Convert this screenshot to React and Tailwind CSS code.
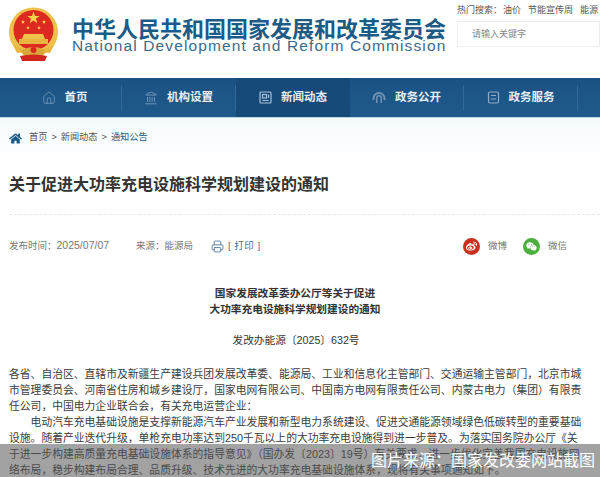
import { Home, Landmark, Printer } from "lucide-react";
import { FaHome, FaWeibo, FaWeixin } from "react-icons/fa";

const font = { fontFamily: '"Liberation Sans", "Noto Sans CJK SC", sans-serif' };

const bodyLines = [
  "各省、自治区、直辖市及新疆生产建设兵团发展改革委、能源局、工业和信息化主管部门、交通运输主管部门，北京市城",
  "市管理委员会、河南省住房和城乡建设厅，国家电网有限公司、中国南方电网有限责任公司、内蒙古电力（集团）有限责",
  "任公司，中国电力企业联合会，有关充电运营企业：",
  "　　电动汽车充电基础设施是支撑新能源汽车产业发展和新型电力系统建设、促进交通能源领域绿色低碳转型的重要基础",
  "设施。随着产业迭代升级，单枪充电功率达到250千瓦以上的大功率充电设施得到进一步普及。为落实国务院办公厅《关",
  "于进一步构建高质量充电基础设施体系的指导意见》（国办发〔2023〕19号）有关要求，进一步优化完善我国充电设施网",
  "络布局，稳步构建布局合理、品质升级、技术先进的大功率充电基础设施体系，现将有关事项通知如下。",
];

const star = (cx, cy, r) => {
  const pts = [];
  for (let i = 0; i < 10; i++) {
    const a = (Math.PI / 5) * i - Math.PI / 2;
    const rad = i % 2 ? r * 0.4 : r;
    pts.push(`${cx + rad * Math.cos(a)},${cy + rad * Math.sin(a)}`);
  }
  return pts.join(" ");
};

function Emblem() {
  return (
    <svg width="50" height="54" viewBox="0 0 50 54" className="shrink-0">
      <circle cx="24.5" cy="25" r="24.5" fill="#efc04a" />
      <circle cx="24.5" cy="23" r="20" fill="#dc2a20" />
      <polygon points={star(24.5, 11, 6.5)} fill="#f8d24a" />
      <polygon points={star(14, 15, 2.2)} fill="#f8d24a" />
      <polygon points={star(35, 15, 2.2)} fill="#f8d24a" />
      <polygon points={star(19, 21, 2)} fill="#f8d24a" />
      <polygon points={star(30, 21, 2)} fill="#f8d24a" />
      <path d="M15 27h19l2 5h-23z" fill="#f0c24c" />
      <rect x="10" y="32" width="29" height="5" fill="#e8b53f" />
      <path d="M4 38 Q24.5 48 45 38 L41 46 Q24.5 43 8 46 Z" fill="#e8b53f" />
      <path d="M13 43 Q24.5 37 36 43 L34 50 Q24.5 47 15 50 Z" fill="#d9a83a" />
      <circle cx="24.5" cy="43" r="3" fill="#dc2a20" />
      <path d="M11 49 Q24.5 46 38 49 L36 54 H13 Z" fill="#cf261d" />
    </svg>
  );
}

function NewsIcon() {
  return (
    <svg width="13" height="13" viewBox="0 0 13 13" fill="none" stroke="#a9c0d6" strokeWidth="1.2">
      <rect x="1" y="1" width="11" height="11" rx="1" />
      <rect x="3.5" y="3.5" width="4" height="3.5" />
      <path d="M9.5 3.5v3.5M3.5 9.5h6" />
    </svg>
  );
}

function OpenIcon() {
  return (
    <svg width="14" height="13" viewBox="0 0 14 13" fill="#6f93b4">
      <path d="M7 1a6.5 6.5 0 0 0-6.5 6.5V9h2V7.5a4.5 4.5 0 0 1 9 0V9h2V7.5A6.5 6.5 0 0 0 7 1Z" />
      <path d="M7 4a3 3 0 0 0-3 3v5h1.5V7a1.5 1.5 0 0 1 3 0v5H10V7a3 3 0 0 0-3-3Z" />
    </svg>
  );
}

function ServiceIcon() {
  return (
    <svg width="13" height="13" viewBox="0 0 13 13" fill="none" stroke="#8fabc6" strokeWidth="1.2">
      <rect x="1.5" y="1" width="10" height="11" rx="1.5" />
      <path d="M4 4.5h5M4 8h5" />
    </svg>
  );
}

const navItems = [
  { label: "首页", icon: <Home size={14} color="#7f9fbe" strokeWidth={1.3} /> },
  { label: "机构设置", icon: <Landmark size={14} color="#8aa8c4" strokeWidth={1.3} /> },
  { label: "新闻动态", icon: <NewsIcon />, active: true },
  { label: "政务公开", icon: <OpenIcon /> },
  { label: "政务服务", icon: <ServiceIcon /> },
];

export default function App() {
  return (
    <div className="relative h-[477px] w-[600px] overflow-hidden bg-white" style={font}>
      {/* Header */}
      <div className="flex h-[78px]">
        <div className="flex w-[457px] shrink-0 items-start gap-[13px] pl-[9px] pt-[7px]">
          <Emblem />
          <div className="pt-[13px]">
            <div className="whitespace-nowrap text-[22px] font-bold leading-[20px] text-[#1d5b87]">
              中华人民共和国国家发展和改革委员会
            </div>
            <div className="whitespace-nowrap text-[15.5px] leading-[12px] tracking-[1.12px] text-[#3d6a8c]">
              National Development and Reform Commission
            </div>
          </div>
        </div>
        <div className="min-w-0 flex-1 pt-[4px]">
          <div className="whitespace-nowrap text-[9px] leading-[12px] text-[#555]">
            <span>热门搜索：</span>
            <span className="ml-[1px]">油价</span>
            <span className="ml-[7px]">节能宣传周</span>
            <span className="ml-[7px]">能源</span>
          </div>
          <div className="mt-[5px] h-[26px] border border-[#eeeeee] pl-[14px] text-[9px] leading-[24px] text-[#888]">
            请输入关键字
          </div>
        </div>
      </div>

      {/* Nav */}
      <div className="flex h-[40px] border-b border-[#b9d8e6] bg-gradient-to-b from-[#1a5283] to-[#1f5a8c] pl-[8px]">
        {navItems.map((item) => (
          <div
            key={item.label}
            className={`flex w-[114px] items-center ${item.active ? "bg-[#164a78]" : ""}`}
          >
            <div className="flex flex-1 items-center justify-center gap-[9px]">
              {item.icon}
              <span className="text-[11.5px] font-bold text-[#e6eef5]">{item.label}</span>
            </div>
            {!item.active && <span className="h-[26px] w-px bg-[#33699a]" />}
          </div>
        ))}
      </div>

      {/* Breadcrumb */}
      <div className="flex h-[40px] items-center gap-[4px] bg-gradient-to-b from-[#f3f9fc] to-white pl-[9px] text-[9.2px] text-[#555]">
        <FaHome size={13} color="#1d5b87" />
        <span className="ml-[3px]">首页</span>
        <span>&gt;</span>
        <span>新闻动态</span>
        <span>&gt;</span>
        <span className="text-[#1d5b87]">通知公告</span>
      </div>

      {/* Article title */}
      <div className="ml-[9px] h-[57px] border-b border-dashed border-[#e6e6e6] pt-[16px] text-[16px] font-bold leading-[22px] text-[#333]">
        关于促进大功率充电设施科学规划建设的通知
      </div>

      {/* Meta row */}
      <div className="flex h-[62px] items-center pl-[9px] text-[9.5px] text-[#777]">
        <span className="w-[127px] whitespace-nowrap">
          发布时间：<span className="text-[10.5px]">2025/07/07</span>
        </span>
        <span className="w-[75px] whitespace-nowrap">来源：能源局</span>
        <Printer size={13} color="#3f6e96" strokeWidth={1.5} />
        <span className="ml-[4px] w-[32px] whitespace-nowrap tracking-[0.5px] text-[#3f6e96]">[ 打印 ]</span>
        <div className="ml-[203px] flex items-center gap-[8px]">
          <span className="flex h-[17px] w-[17px] items-center justify-center rounded-full bg-[#c9301f]">
            <FaWeibo size={11} color="#fff" />
          </span>
          <span className="whitespace-nowrap">微博</span>
          <span className="ml-[8px] flex h-[17px] w-[17px] items-center justify-center rounded-full bg-[#4caf3c]">
            <FaWeixin size={11} color="#fff" />
          </span>
          <span className="whitespace-nowrap">微信</span>
        </div>
      </div>

      {/* Article head */}
      <div className="ml-[-10px] pt-[8px] text-center text-[10.7px] font-bold leading-[16px] text-[#333]">
        <div>国家发展改革委办公厅等关于促进</div>
        <div>大功率充电设施科学规划建设的通知</div>
      </div>
      <div className="ml-[-8px] mt-[15px] text-center text-[10.7px] leading-[16px] text-[#333]">
        发改办能源〔2025〕632号
      </div>

      {/* Article body */}
      <div className="mt-[18px] pl-[9px] text-[10.8px] leading-[16px] text-[#3c3c3c]">
        {bodyLines.map((line) => (
          <div key={line} className="whitespace-nowrap">
            {line}
          </div>
        ))}
      </div>

      {/* Image credit */}
      <div className="absolute bottom-0 left-0 flex h-[33px] w-full items-center justify-end bg-[#555]/55 pr-[5px] text-[16px] text-white">
        图片来源：国家发改委网站截图
      </div>
    </div>
  );
}
